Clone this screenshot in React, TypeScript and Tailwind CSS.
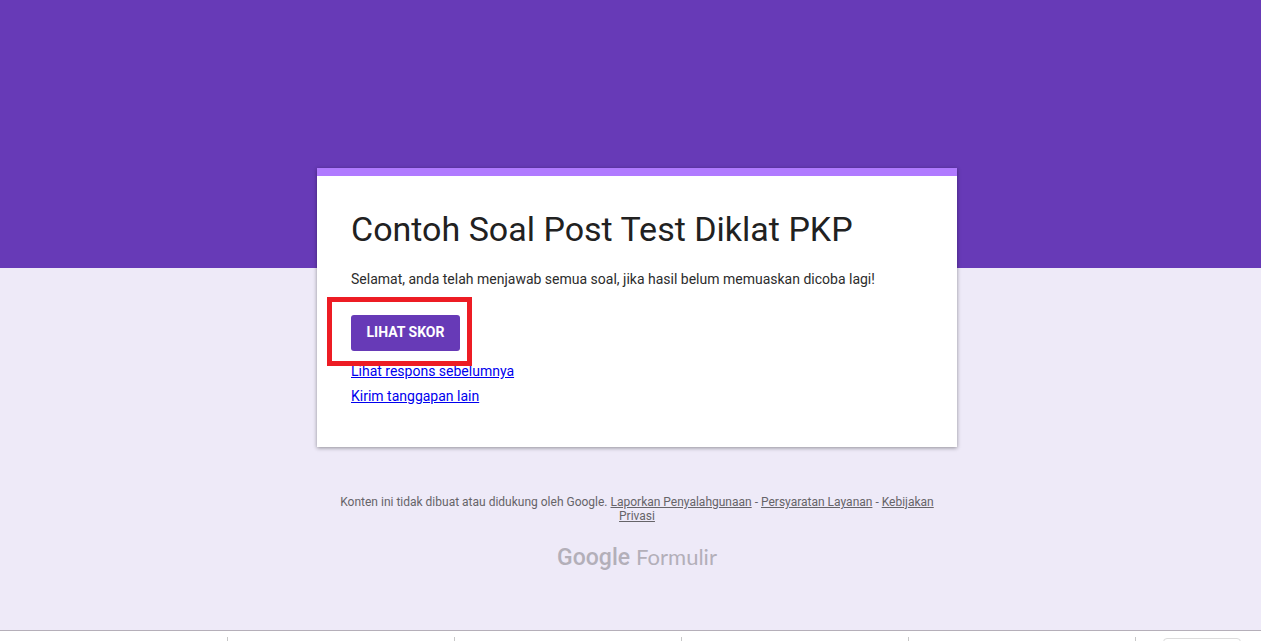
const downloads = ["a", "b", "c", "d", "e"];

function ResponseCard() {
  return (
    <main className="w-full max-w-[640px] border-t-8 border-[#b07aff] bg-white px-[34px] pt-[33px] pb-[38px] shadow-[0_1px_4px_rgba(0,0,0,0.4)]">
      <h1 className="text-[34px] leading-10 text-[#212121]">Contoh Soal Post Test Diklat PKP</h1>
      <p className="mt-5 text-sm leading-5 text-[#2c2c2c]">
        Selamat, anda telah menjawab semua soal, jika hasil belum memuaskan dicoba lagi!
      </p>
      <div className="relative mt-[26px] w-fit">
        <button
          type="button"
          className="block h-9 w-[109px] rounded-[3px] bg-[#673ab7] pb-[2px] text-sm font-bold text-white"
        >
          LIHAT SKOR
        </button>
        <div className="pointer-events-none absolute -top-[18px] -right-3 -bottom-[15px] -left-6 z-10 border-[5px] border-[#ed1c24]" />
      </div>
      <ul className="mt-2 text-sm leading-[25px]">
        <li>
          <a href="#respons" className="text-[#0000ee] underline">
            Lihat respons sebelumnya
          </a>
        </li>
        <li>
          <a href="#kirim" className="text-[#0000ee] underline">
            Kirim tanggapan lain
          </a>
        </li>
      </ul>
    </main>
  );
}

function PageFooter() {
  return (
    <footer className="mt-12 w-full max-w-[640px] px-5 text-center">
      <p className="text-xs leading-[14px] text-[#666469]">
        Konten ini tidak dibuat atau didukung oleh Google.{" "}
        <a href="#laporkan" className="underline">
          Laporkan Penyalahgunaan
        </a>{" "}
        -{" "}
        <a href="#persyaratan" className="underline">
          Persyaratan Layanan
        </a>{" "}
        -{" "}
        <a href="#privasi" className="underline">
          Kebijakan Privasi
        </a>
      </p>
      <a
        href="#formulir"
        className="mt-[18px] inline-flex items-baseline gap-[6px] leading-8 text-[#b3afb9]"
      >
        <span className="text-[23px] leading-8 font-medium">Google</span>
        <span className="font-[Lato] text-[22px] leading-8">Formulir</span>
      </a>
    </footer>
  );
}

function DownloadShelf() {
  return (
    <div className="flex h-[11px] overflow-hidden border-t border-[#b5afb9] bg-white">
      {downloads.map((id) => (
        <div key={id} className="mt-[6px] h-8 w-[227px] shrink-0 border-r border-[#c8c8c8] first:w-[228px]" />
      ))}
      <button
        type="button"
        aria-label="Tampilkan semua"
        className="mt-[7px] mr-5 ml-auto h-8 w-[78px] shrink-0 rounded-[4px] border border-[#dcdcdc] bg-white"
      />
    </div>
  );
}

export default function App() {
  return (
    <div className="flex min-h-screen flex-col bg-[#eeeaf8] font-[Roboto,sans-serif]">
      <div className="h-[268px] bg-[#673ab7]" />
      <div className="-mt-[100px] flex flex-1 flex-col items-center pl-[13px]">
        <ResponseCard />
        <PageFooter />
      </div>
      <DownloadShelf />
    </div>
  );
}
